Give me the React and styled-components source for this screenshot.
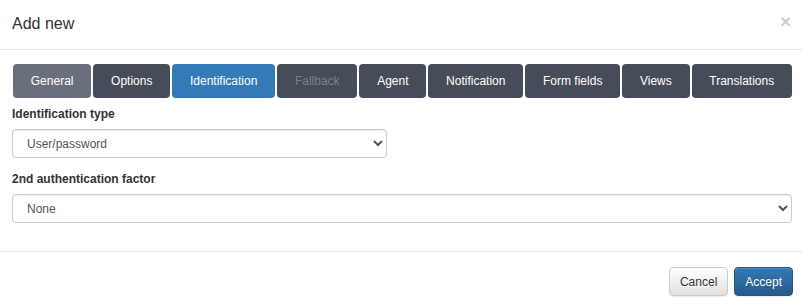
import React from 'react';
import styled, { createGlobalStyle } from 'styled-components';

const GlobalStyle = createGlobalStyle`
  html, body {
    margin: 0;
    padding: 0;
    background: #ffffff;
  }
  body {
    font-family: "Liberation Sans", Arial, sans-serif;
    font-size: 12px;
    color: #333333;
  }
  * {
    box-sizing: border-box;
  }
`;

const tabs = [
  { label: 'General', variant: 'light' },
  { label: 'Options' },
  { label: 'Identification', variant: 'active' },
  { label: 'Fallback', variant: 'disabled' },
  { label: 'Agent' },
  { label: 'Notification' },
  { label: 'Form fields' },
  { label: 'Views' },
  { label: 'Translations' },
];

const App = () => {
  return (
    <>
      <GlobalStyle />
      <Modal>
        <Header>
          <Title>Add new</Title>
          <Close type="button">×</Close>
        </Header>

        <Body>
          <TabBar>
            {tabs.map((t) => (
              <Tab key={t.label} $variant={t.variant}>
                {t.label}
              </Tab>
            ))}
          </TabBar>

          <Field>
            <Label>Identification type</Label>
            <Select $width="375px" defaultValue="user">
              <option value="user">User/password</option>
            </Select>
          </Field>

          <Field>
            <Label>2nd authentication factor</Label>
            <Select defaultValue="none">
              <option value="none">None</option>
            </Select>
          </Field>
        </Body>

        <Footer>
          <Button type="button">Cancel</Button>
          <Button type="button" $primary>Accept</Button>
        </Footer>
      </Modal>
    </>
  );
};

const Modal = styled.div`
  width: 803px;
  height: 305px;
  background: #ffffff;
  overflow: hidden;
`;

const Header = styled.div`
  display: flex;
  align-items: center;
  justify-content: space-between;
  height: 50px;
  padding: 0 12px;
  border-bottom: 1px solid #e5e5e5;
`;

const Title = styled.h4`
  margin: 0;
  font-size: 16px;
  font-weight: normal;
  color: #333333;
  line-height: 1.4;
`;

const Close = styled.button`
  border: 0;
  background: transparent;
  padding: 0;
  margin-top: -7px;
  font-family: "Liberation Sans", Arial, sans-serif;
  font-size: 19px;
  font-weight: bold;
  line-height: 1;
  color: #000000;
  opacity: 0.2;
  cursor: pointer;
`;

const Body = styled.div`
  padding: 14px 11px 28px 12px;
`;

const TabBar = styled.div`
  display: flex;
  gap: 2px;
  margin: 0 0 8px 1px;
`;

const tabBg = {
  light: '#6a707b',
  active: '#337ab7',
  disabled: '#464d58',
};

const Tab = styled.button`
  flex: 1 1 auto;
  height: 34px;
  padding: 0 16px;
  border: 0;
  border-radius: 4px;
  background: ${(p) => tabBg[p.$variant] || '#464d58'};
  color: ${(p) => (p.$variant === 'disabled' ? '#7c8189' : '#ffffff')};
  font-family: "Liberation Sans", Arial, sans-serif;
  font-size: 12px;
  white-space: nowrap;
  cursor: ${(p) => (p.$variant === 'disabled' ? 'not-allowed' : 'pointer')};
`;

const Field = styled.div`
  & + & {
    margin-top: 13px;
  }
`;

const Label = styled.label`
  display: block;
  font-size: 12px;
  font-weight: bold;
  line-height: 17px;
  margin-bottom: 6px;
  color: #333333;
`;

const Select = styled.select`
  display: block;
  width: ${(p) => p.$width || '100%'};
  height: 29px;
  padding: 0 8px 0 10px;
  border: 1px solid #cccccc;
  border-radius: 4px;
  background: #ffffff;
  color: #555555;
  font-family: "Liberation Sans", Arial, sans-serif;
  font-size: 12px;
  box-shadow: inset 0 1px 1px rgba(0, 0, 0, 0.075);
`;

const Footer = styled.div`
  display: flex;
  justify-content: flex-end;
  gap: 6px;
  padding: 15px 10px;
  border-top: 1px solid #e5e5e5;
`;

const Button = styled.button`
  height: 29px;
  padding: 0 10px;
  border-radius: 4px;
  font-family: "Liberation Sans", Arial, sans-serif;
  font-size: 12px;
  cursor: pointer;
  color: ${(p) => (p.$primary ? '#ffffff' : '#333333')};
  border: 1px solid ${(p) => (p.$primary ? '#245580' : '#cccccc')};
  background: ${(p) =>
    p.$primary
      ? 'linear-gradient(to bottom, #337ab7 0%, #265a88 100%)'
      : 'linear-gradient(to bottom, #ffffff 0%, #e0e0e0 100%)'};
  text-shadow: ${(p) => (p.$primary ? '0 -1px 0 rgba(0,0,0,0.2)' : '0 1px 0 #fff')};
  box-shadow: inset 0 1px 0 rgba(255, 255, 255, 0.15), 0 1px 1px rgba(0, 0, 0, 0.075);
`;

export default App;
